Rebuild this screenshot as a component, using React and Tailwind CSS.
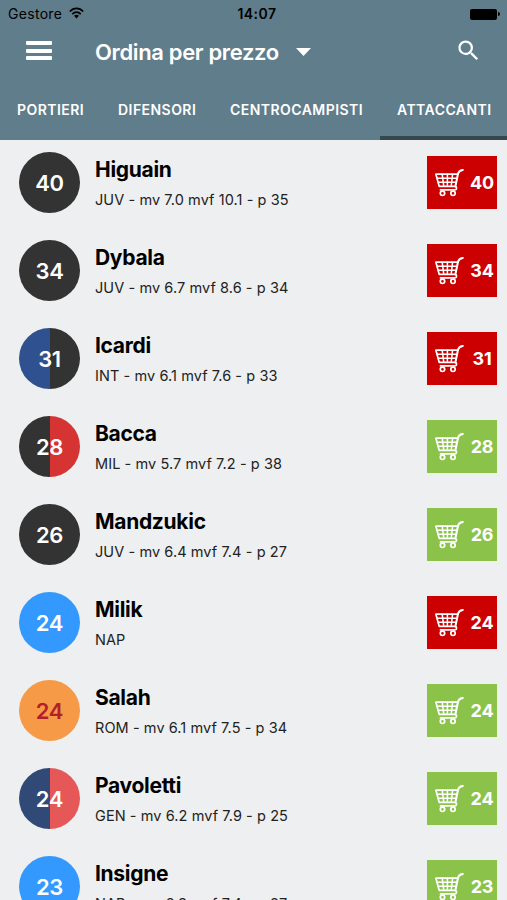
import React from "react";
import clsx from "clsx";

const tabs = [
  { label: "PORTIERI", className: "w-[101px] pl-[17px]", text: "w-[68px]" },
  { label: "DIFENSORI", className: "w-[112px] pl-[17px]", text: "w-[79px]" },
  { label: "CENTROCAMPISTI", className: "w-[167px] pl-[17px]", text: "w-[134px]" },
  { label: "ATTACCANTI", className: "w-[127px] pl-[17px]", text: "w-[94px]", active: true },
];

const players = [
  { name: "Higuain", price: 40, info: "JUV - mv 7.0 mvf 10.1 - p 35", left: "bg-[#333333]", right: "bg-[#333333]", taken: true },
  { name: "Dybala", price: 34, info: "JUV - mv 6.7 mvf 8.6 - p 34", left: "bg-[#333333]", right: "bg-[#333333]", taken: true },
  { name: "Icardi", price: 31, info: "INT - mv 6.1 mvf 7.6 - p 33", left: "bg-[#2f518f]", right: "bg-[#333333]", taken: true },
  { name: "Bacca", price: 28, info: "MIL - mv 5.7 mvf 7.2 - p 38", left: "bg-[#333333]", right: "bg-[#d63333]" },
  { name: "Mandzukic", price: 26, info: "JUV - mv 6.4 mvf 7.4 - p 27", left: "bg-[#333333]", right: "bg-[#333333]" },
  { name: "Milik", price: 24, info: "NAP", left: "bg-[#3399ff]", right: "bg-[#3399ff]", taken: true },
  { name: "Salah", price: 24, info: "ROM - mv 6.1 mvf 7.5 - p 34", left: "bg-[#f79a48]", right: "bg-[#f79a48]", color: "text-[#b2202a]" },
  { name: "Pavoletti", price: 24, info: "GEN - mv 6.2 mvf 7.9 - p 25", left: "bg-[#304977]", right: "bg-[#e65757]" },
  { name: "Insigne", price: 23, info: "NAP - mv 6.3 mvf 7.4 - p 27", left: "bg-[#3399ff]", right: "bg-[#3399ff]" },
];

const CartIcon = () => (
  <svg className="w-[30px] h-[28px] shrink-0" viewBox="0 0 30 28" fill="none" stroke="white" strokeWidth="1.7" strokeLinecap="round" strokeLinejoin="round">
    <path d="M27.8 .9C24.8 1.3 23.8 2.2 23 4.8L20.4 17.5" strokeWidth="2" />
    <path d="M.9 5.2H22.9M.9 5.2L4.2 17.3H20.4M5.5 20.9H20.1C22 20.9 22 17.8 20.4 17.5" />
    <path d="M2.1 9.3H22M3.2 13.3H21.1M7.2 5.2L8.8 17.3M12.4 5.2V17.3M17.6 5.2L16.2 17.3" strokeWidth="1.5" />
    <circle cx="7.5" cy="24.3" r="2.2" />
    <circle cx="18" cy="24.3" r="2.2" />
  </svg>
);

const StatusBar = () => (
  <div className="h-7 grid grid-cols-[1fr_auto_1fr] items-center pl-2 pr-[7px] text-black">
    <div className="flex items-center gap-[7px]">
      <span className="text-[14px] leading-5 tracking-[0.3px]">Gestore</span>
      <svg className="w-[15px] h-3 mb-0.5" viewBox="0 0 15 12" fill="none" stroke="black" strokeWidth="1.8">
        <path d="M.8 4.5C4.7.3 10.3.3 14.2 4.5M3.3 7.1C5.8 4.5 9.2 4.5 11.7 7.1" />
        <path d="M5 8.7C6.5 7.3 8.5 7.3 10 8.7L7.5 11.4Z" fill="black" stroke="none" />
      </svg>
    </div>
    <span className="ml-1.5 text-[14px] leading-5 font-semibold tracking-[0.5px]">14:07</span>
    <div className="flex items-center justify-end gap-px">
      <div className="w-[27px] h-[11px] rounded-[2px] bg-black" />
      <div className="w-0.5 h-1 rounded-r-full bg-black" />
    </div>
  </div>
);

const PlayerRow = ({ player }) => (
  <div className="h-[88px] shrink-0 flex pl-[19px] pr-[10px] pt-3">
    <div className="relative w-[61px] h-[61px] rounded-full overflow-hidden flex shrink-0">
      <div className={clsx("w-[31px]", player.left)} />
      <div className={clsx("w-[30px]", player.right)} />
      <span className={clsx("absolute inset-0 flex items-center justify-center pt-px text-[22px] font-semibold tracking-[-0.3px]", player.color || "text-white")}>
        {player.price}
      </span>
    </div>
    <div className="ml-[15px] flex-1 pt-1">
      <h3 className="text-[21px] leading-7 font-bold tracking-[-0.3px] text-black">{player.name}</h3>
      <p className="mt-[6px] text-[14.5px] leading-5 tracking-[0.08px] text-[#222222] whitespace-nowrap">{player.info}</p>
    </div>
    <button className={clsx("mt-1 w-[70px] h-[53px] flex items-center justify-between pl-2 pr-[3px]", player.taken ? "bg-[#cc0000]" : "bg-[#8bc34a]")}>
      <CartIcon />
      <span className="w-6 text-center text-[18px] font-bold tracking-[-0.2px] text-white">{player.price}</span>
    </button>
  </div>
);

const App = () => {
  return (
    <div className="w-[507px] h-[900px] overflow-hidden flex flex-col bg-[#edeff0] font-['Inter',sans-serif]">
      <header className="h-[140px] shrink-0 bg-[#607d8b]">
        <StatusBar />
        <div className="h-12 flex items-center pl-[26px] pr-[25px] text-white">
          <div className="w-[26px] flex flex-col gap-[3.5px] mb-[3px]">
            <div className="h-1 rounded-[1px] bg-white" />
            <div className="h-1 rounded-[1px] bg-white" />
            <div className="h-1 rounded-[1px] bg-white" />
          </div>
          <h1 className="ml-[43px] w-[184px] text-[22px] font-semibold tracking-[-0.35px] whitespace-nowrap">Ordina per prezzo</h1>
          <svg className="ml-[17px] w-[15px] h-2" viewBox="0 0 15 8">
            <path d="M0 0H15L7.5 8Z" fill="white" />
          </svg>
          <svg className="ml-auto mb-[3px] w-[27px] h-[27px]" viewBox="0 0 24 24" fill="white">
            <path d="M15.5 14h-.79l-.28-.27A6.47 6.47 0 0 0 16 9.5 6.5 6.5 0 1 0 9.5 16c1.61 0 3.09-.59 4.23-1.57l.27.28v.79l5 4.99L20.49 19l-4.99-5zm-6 0C7.01 14 5 11.99 5 9.5S7.01 5 9.5 5 14 7.01 14 9.5 11.99 14 9.5 14z" />
          </svg>
        </div>
        <nav className="h-16 flex text-[14px] font-semibold tracking-[0.45px] text-white">
          {tabs.map((tab) => (
            <div key={tab.label} className={clsx("flex items-center pt-[7px] border-b-4", tab.className, tab.active ? "border-[#37474f]" : "border-transparent")}>
              <span className={clsx("whitespace-nowrap", tab.text)}>{tab.label}</span>
            </div>
          ))}
        </nav>
      </header>
      <main className="flex-1 overflow-hidden flex flex-col">
        {players.map((player) => (
          <PlayerRow key={player.name} player={player} />
        ))}
      </main>
    </div>
  );
};

export default App;
